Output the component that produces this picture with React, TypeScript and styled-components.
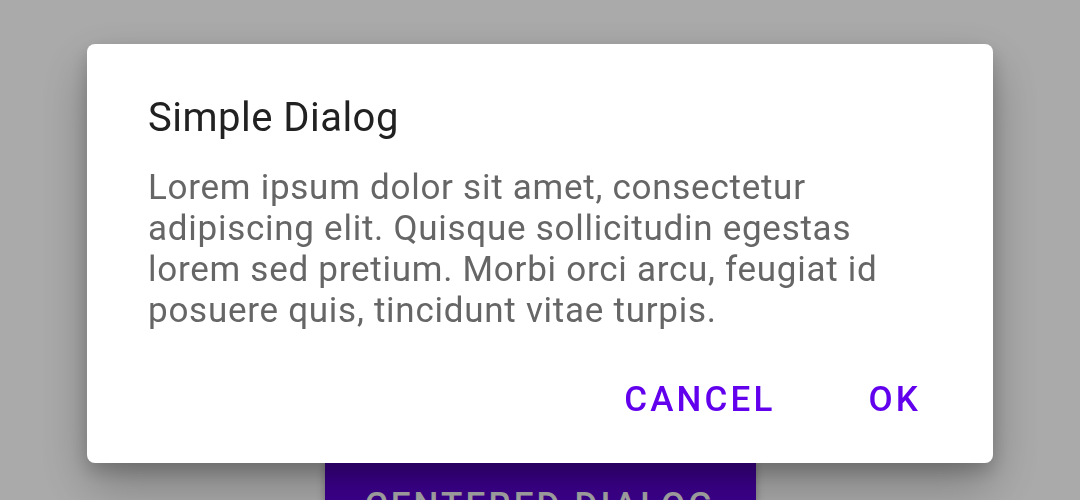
import React from "react"
import styled, { createGlobalStyle } from "styled-components"

const GlobalStyle = createGlobalStyle`
    html, body {
        margin:0;
        padding:0;
        width:1080px;
        height:500px;
        overflow:hidden;
        font-family:Roboto, "Liberation Sans", sans-serif;
    }
`

const Screen = styled.div`
    width:1080px;
    height:500px;
    background:#ffffff;
    display:flex;
    flex-direction:column;
    align-items:center;
    padding-top:457px;
    box-sizing:border-box;
    overflow:hidden;
`

const MainButton = styled.button`
    width:431px;
    height:96px;
    flex-shrink:0;
    border:none;
    border-radius:6px;
    background:#5b00d6;
    color:#ffffff;
    font-family:Roboto, sans-serif;
    font-weight:500;
    font-size:35px;
    letter-spacing:0.09em;
    box-shadow:0 4px 8px rgba(0,0,0,0.3);
`

const Scrim = styled.div`
    position:fixed;
    inset:0;
    background:rgba(0,0,0,0.333);
    display:flex;
    align-items:flex-start;
    justify-content:center;
    padding-top:44px;
`

const Dialog = styled.div`
    width:906px;
    height:419px;
    box-sizing:border-box;
    background:#ffffff;
    border-radius:8px;
    box-shadow:0 22px 50px rgba(0,0,0,0.28), 0 8px 18px rgba(0,0,0,0.18);
    padding:50px 61px 0 61px;
    display:flex;
    flex-direction:column;
`

const Title = styled.h2`
    margin:0;
    font-weight:400;
    font-size:40px;
    line-height:48px;
    letter-spacing:0.012em;
    color:#212121;
`

const Body = styled.p`
    margin:25px 0 0 0;
    font-size:35px;
    line-height:41px;
    color:#666666;
    letter-spacing:0.021em;
`

const Actions = styled.div`
    display:flex;
    justify-content:flex-end;
    gap:93px;
    margin-top:48px;
    margin-right:11px;
`

const TextButton = styled.button`
    background:none;
    border:none;
    padding:0;
    font-family:Roboto, sans-serif;
    font-weight:500;
    font-size:35px;
    line-height:41px;
    letter-spacing:0.09em;
    color:#6200ee;
`

export default function App() {
    return (
        <>
            <GlobalStyle />
            <Screen>
                <MainButton>CENTERED DIALOG</MainButton>
            </Screen>
            <Scrim>
                <Dialog>
                    <Title>Simple Dialog</Title>
                    <Body>
                        Lorem ipsum dolor sit amet, consectetur adipiscing elit. Quisque sollicitudin egestas lorem sed pretium. Morbi orci arcu, feugiat id posuere quis, tincidunt vitae turpis.
                    </Body>
                    <Actions>
                        <TextButton>CANCEL</TextButton>
                        <TextButton>OK</TextButton>
                    </Actions>
                </Dialog>
            </Scrim>
        </>
    )
}
